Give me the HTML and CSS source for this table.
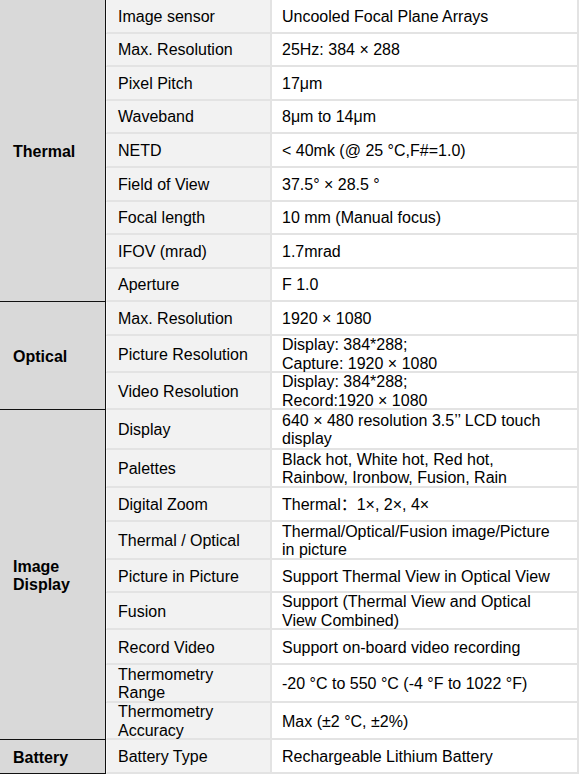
FILE: index.html
```html
<!DOCTYPE html>
<html>
<head>
<meta charset="utf-8">
<link rel="stylesheet" href="styles.css">
</head>
<body>
<div class="spec">
  <div class="grp g-thermal">Thermal</div>
  <div class="k">Image sensor</div><div class="v">Uncooled Focal Plane Arrays</div>
  <div class="k">Max. Resolution</div><div class="v">25Hz: 384 × 288</div>
  <div class="k">Pixel Pitch</div><div class="v">17μm</div>
  <div class="k">Waveband</div><div class="v">8μm to 14μm</div>
  <div class="k">NETD</div><div class="v">&lt; 40mk (@ 25 °C,F#=1.0)</div>
  <div class="k">Field of View</div><div class="v">37.5° × 28.5 °</div>
  <div class="k">Focal length</div><div class="v">10 mm (Manual focus)</div>
  <div class="k">IFOV (mrad)</div><div class="v">1.7mrad</div>
  <div class="k">Aperture</div><div class="v">F 1.0</div>

  <div class="grp g-optical">Optical</div>
  <div class="k">Max. Resolution</div><div class="v">1920 × 1080</div>
  <div class="k">Picture Resolution</div><div class="v">Display: 384*288;<br>Capture: 1920 × 1080</div>
  <div class="k">Video Resolution</div><div class="v">Display: 384*288;<br>Record:1920 × 1080</div>

  <div class="grp g-display">Image<br>Display</div>
  <div class="k">Display</div><div class="v">640 × 480 resolution 3.5’’ LCD touch<br>display</div>
  <div class="k">Palettes</div><div class="v">Black hot, White hot, Red hot,<br>Rainbow, Ironbow, Fusion, Rain</div>
  <div class="k">Digital Zoom</div><div class="v">Thermal：1×, 2×, 4×</div>
  <div class="k">Thermal / Optical</div><div class="v">Thermal/Optical/Fusion image/Picture<br>in picture</div>
  <div class="k">Picture in Picture</div><div class="v">Support Thermal View in Optical View</div>
  <div class="k">Fusion</div><div class="v">Support (Thermal View and Optical<br>View Combined)</div>
  <div class="k">Record Video</div><div class="v">Support on-board video recording</div>
  <div class="k">Thermometry<br>Range</div><div class="v">-20 °C to 550 °C (-4 °F to 1022 °F)</div>
  <div class="k">Thermometry<br>Accuracy</div><div class="v">Max (±2 °C, ±2%)</div>

  <div class="grp g-battery">Battery</div>
  <div class="k">Battery Type</div><div class="v">Rechargeable Lithium Battery</div>
</div>
</body>
</html>
```

FILE: styles.css
```css
html, body {
  margin: 0;
  padding: 0;
  background: #ffffff;
}

body {
  font-family: "Liberation Sans", Arial, "Noto Sans CJK SC", sans-serif;
  font-size: 16px;
  line-height: 1.15;
  color: #000;
}

.spec {
  display: grid;
  grid-template-columns: 106px 166px 307px;
  grid-template-rows:
    repeat(9, 33.6px)
    34px 37px 37px
    40px 38px 34px 38px 33px 37px 35px 38px 37px
    34px;
  width: 579px;
}

.grp {
  grid-column: 1;
  background: #d9d9d9;
  border-right: 1px solid #111;
  border-bottom: 1px solid #111;
  box-sizing: border-box;
  display: flex;
  align-items: center;
  padding-left: 13px;
  padding-top: 3px;
  font-weight: bold;
}

.g-thermal { grid-row: span 9; }
.g-optical { grid-row: span 3; }
.g-display { grid-row: span 9; }
.g-battery { grid-row: span 1; }

.k, .v {
  box-sizing: border-box;
  display: flex;
  align-items: center;
  padding-top: 2px;
  border-bottom: 2px solid #e3e3e3;
  border-right: 2px solid #e3e3e3;
  white-space: nowrap;
}

.k {
  grid-column: 2;
  background: #f2f2f2;
  border-left: 1px solid #fafafa;
  padding-left: 11px;
}

.v {
  grid-column: 3;
  background: #ffffff;
  padding-left: 10px;
}
```
